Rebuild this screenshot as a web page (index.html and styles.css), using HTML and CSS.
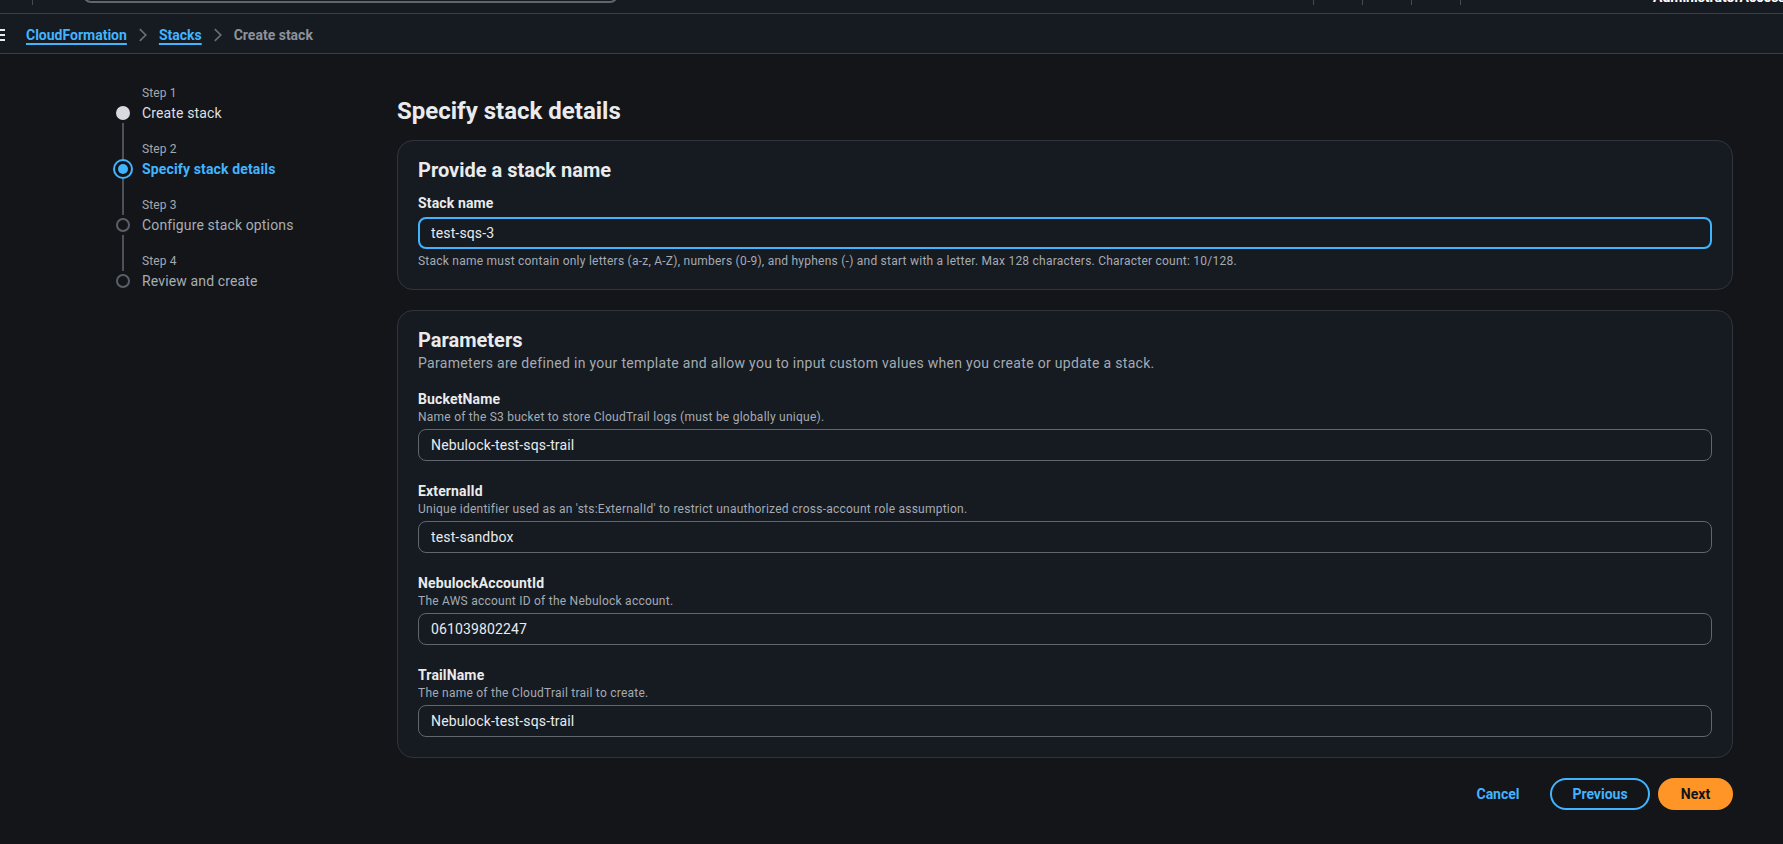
FILE: index.html
```html
<!DOCTYPE html>
<html lang="en">
<head>
<meta charset="utf-8">
<title>Create stack - CloudFormation</title>
<link rel="stylesheet" href="styles.css">
</head>
<body>
<header class="topnav">
  <span class="tn-line"></span>
  <span class="tn-search"></span>
  <span class="tn-sep tn-sep-first"></span>
  <span class="tn-sep"></span>
  <span class="tn-sep"></span>
  <span class="tn-sep"></span>
  <span class="tn-user">AdministratorAccess/nebulock</span>
</header>

<nav class="crumbbar">
  <svg class="burger" width="16" height="13" viewBox="0 0 16 13" aria-hidden="true">
    <rect x="0" y="0" width="16" height="2" fill="#e9ebed"/>
    <rect x="0" y="5" width="16" height="2" fill="#e9ebed"/>
    <rect x="0" y="10" width="16" height="2" fill="#e9ebed"/>
  </svg>
  <a class="crumb" href="#">CloudFormation</a>
  <svg class="chev" width="16" height="16" viewBox="0 0 16 16" aria-hidden="true"><path d="M4.8 2.2 L10.8 8 L4.8 13.8" fill="none" stroke="#6b7079" stroke-width="1.6"/></svg>
  <a class="crumb" href="#">Stacks</a>
  <svg class="chev" width="16" height="16" viewBox="0 0 16 16" aria-hidden="true"><path d="M4.8 2.2 L10.8 8 L4.8 13.8" fill="none" stroke="#6b7079" stroke-width="1.6"/></svg>
  <span class="crumb-current">Create stack</span>
</nav>

<div class="layout">
  <aside class="steps">
    <div class="step">
      <div class="step-label">Step 1</div>
      <div class="ind"><span class="dot-done"></span></div>
      <div class="step-title st-done">Create stack</div>
      <div class="line line-bot"></div>
    </div>
    <div class="step">
      <div class="line line-top"></div>
      <div class="step-label">Step 2</div>
      <div class="ind"><span class="dot-active"><span class="dot-active-inner"></span></span></div>
      <div class="step-title st-active">Specify stack details</div>
      <div class="line line-bot"></div>
    </div>
    <div class="step">
      <div class="line line-top"></div>
      <div class="step-label">Step 3</div>
      <div class="ind"><span class="dot-off"></span></div>
      <div class="step-title st-off">Configure stack options</div>
      <div class="line line-bot"></div>
    </div>
    <div class="step step-last">
      <div class="line line-top"></div>
      <div class="step-label">Step 4</div>
      <div class="ind"><span class="dot-off"></span></div>
      <div class="step-title st-off">Review and create</div>
    </div>
  </aside>

  <main class="content">
    <h1 class="page-title">Specify stack details</h1>

    <section class="card">
      <div class="card-header">
        <h2 class="card-title">Provide a stack name</h2>
      </div>
      <div class="card-body card-body-tight">
        <div class="field">
          <div class="label">Stack name</div>
          <input class="input input-focus" type="text" value="test-sqs-3">
          <div class="constraint">Stack name must contain only letters (a-z, A-Z), numbers (0-9), and hyphens (-) and start with a letter. Max 128 characters. Character count: 10/128.</div>
        </div>
      </div>
    </section>

    <section class="card">
      <div class="card-header">
        <h2 class="card-title">Parameters</h2>
        <div class="card-desc">Parameters are defined in your template and allow you to input custom values when you create or update a stack.</div>
      </div>
      <div class="card-body">
        <div class="field">
          <div class="label">BucketName</div>
          <div class="field-desc">Name of the S3 bucket to store CloudTrail logs (must be globally unique).</div>
          <input class="input" type="text" value="Nebulock-test-sqs-trail">
        </div>
        <div class="field">
          <div class="label">ExternalId</div>
          <div class="field-desc">Unique identifier used as an 'sts:ExternalId' to restrict unauthorized cross-account role assumption.</div>
          <input class="input" type="text" value="test-sandbox">
        </div>
        <div class="field">
          <div class="label">NebulockAccountId</div>
          <div class="field-desc">The AWS account ID of the Nebulock account.</div>
          <input class="input" type="text" value="061039802247">
        </div>
        <div class="field">
          <div class="label">TrailName</div>
          <div class="field-desc">The name of the CloudTrail trail to create.</div>
          <input class="input" type="text" value="Nebulock-test-sqs-trail">
        </div>
      </div>
    </section>

    <div class="actions">
      <button class="btn btn-cancel" type="button">Cancel</button>
      <button class="btn btn-prev" type="button">Previous</button>
      <button class="btn btn-next" type="button">Next</button>
    </div>
  </main>
</div>
</body>
</html>
```

FILE: styles.css
```css
html, body {
  margin: 0;
  padding: 0;
}

body {
  background: #131519;
  color: #e9ebed;
  font-family: Roboto, "Noto Sans", "Liberation Sans", sans-serif;
  font-size: 14px;
  line-height: 20px;
  min-height: 100vh;
}

/* ---------- top navigation (cut off by the viewport) ---------- */
.topnav {
  height: 13px;
  background: #161a21;
  border-bottom: 1px solid #3b4048;
  display: flex;
  align-items: flex-start;
  overflow: hidden;
}

.tn-line {
  flex-shrink: 0;
  margin-left: 32px;
  width: 1px;
  height: 5px;
  background: #444a52;
}

.tn-search {
  flex-shrink: 0;
  margin-left: 50px;
  margin-top: -29px;
  width: 535px;
  height: 32px;
  box-sizing: border-box;
  border: 2px solid #5f6670;
  border-radius: 8px;
}

.tn-sep {
  flex-shrink: 0;
  width: 1px;
  height: 5px;
  background: #444a52;
  margin-left: 48px;
}

.tn-sep-first {
  margin-left: 695px;
}

.tn-user {
  flex-shrink: 0;
  margin-left: 192px;
  margin-top: -11px;
  font-size: 14px;
  font-weight: 700;
  line-height: 16px;
  color: #ffffff;
  white-space: nowrap;
}

/* ---------- breadcrumbs ---------- */
.crumbbar {
  height: 36px;
  padding-top: 3px;
  background: #161a21;
  border-bottom: 1px solid #3b4048;
  display: flex;
  align-items: center;
  overflow: hidden;
}

.burger {
  flex-shrink: 0;
  margin-left: -11px;
  margin-right: 21px;
}

.crumb {
  color: #42b4ff;
  font-weight: 700;
  text-decoration: underline;
  text-decoration-thickness: 2px;
  text-underline-offset: 3px;
  white-space: nowrap;
}

.chev {
  flex-shrink: 0;
  margin: 0 8px;
}

.crumb-current {
  color: #8d9299;
  font-weight: 700;
  white-space: nowrap;
}

/* ---------- layout ---------- */
.layout {
  display: flex;
  align-items: flex-start;
}

.steps {
  flex-shrink: 0;
  width: 397px;
  box-sizing: border-box;
  padding-left: 113px;
  padding-top: 31px;
}

.step {
  display: grid;
  grid-template-columns: 20px 1fr;
  grid-template-rows: 18px 20px 18px;
  column-gap: 9px;
}

.step-last {
  grid-template-rows: 18px 20px;
}

.step-label {
  grid-row: 1;
  grid-column: 2;
  font-size: 12px;
  line-height: 16px;
  color: #a4a9b0;
  letter-spacing: 0.01em;
}

.step-title {
  grid-row: 2;
  grid-column: 2;
  font-size: 14px;
  line-height: 20px;
  white-space: nowrap;
  letter-spacing: 0.01em;
}

.st-done {
  color: #dedfe3;
}

.st-active {
  color: #42b4ff;
  font-weight: 700;
}

.st-off {
  color: #a8adb4;
}

.ind {
  grid-row: 2;
  grid-column: 1;
  display: flex;
  align-items: center;
  justify-content: center;
}

.line {
  grid-column: 1;
  justify-self: center;
  width: 2px;
  background: #4b5159;
}

.line-top {
  grid-row: 1;
}

.line-bot {
  grid-row: 3;
}

.dot-done {
  width: 14px;
  height: 14px;
  border-radius: 50%;
  background: #d9dadf;
}

.dot-active {
  width: 20px;
  height: 20px;
  box-sizing: border-box;
  border: 2px solid #42b4ff;
  border-radius: 50%;
  display: flex;
  align-items: center;
  justify-content: center;
}

.dot-active-inner {
  width: 10px;
  height: 10px;
  border-radius: 50%;
  background: #42b4ff;
}

.dot-off {
  width: 14px;
  height: 14px;
  box-sizing: border-box;
  border: 2px solid #5a6069;
  border-radius: 50%;
}

/* ---------- main ---------- */
.content {
  flex: 1;
  min-width: 0;
  margin-right: 50px;
  padding-bottom: 20px;
}

.page-title {
  margin: 42px 0 14px;
  font-size: 24px;
  line-height: 30px;
  font-weight: 700;
  color: #e9ebed;
}

.card {
  background: #161a21;
  border: 1px solid #30353d;
  border-radius: 16px;
  margin-bottom: 20px;
}

.card-header {
  padding: 17px 20px 0;
}

.card-title {
  margin: 0;
  font-size: 20px;
  line-height: 24px;
  font-weight: 700;
  color: #e9ebed;
}

.card-desc {
  margin-top: 1px;
  font-size: 14px;
  line-height: 20px;
  color: #a4abb3;
  letter-spacing: 0.022em;
}

.card-body {
  padding: 16px 20px 20px;
}

.card-body-tight {
  padding-top: 11px;
}

.field + .field {
  margin-top: 20px;
}

.label {
  font-size: 14px;
  line-height: 20px;
  font-weight: 700;
  color: #e9ebed;
  letter-spacing: 0.01em;
}

.field-desc {
  font-size: 12px;
  line-height: 16px;
  color: #a4abb3;
  letter-spacing: 0.02em;
}

.input {
  display: block;
  width: 100%;
  height: 32px;
  margin: 4px 0 0;
  box-sizing: border-box;
  padding: 0 12px;
  background: #161a21;
  border: 1px solid #5f6670;
  border-radius: 8px;
  color: #e9ebed;
  font-family: inherit;
  font-size: 14px;
  line-height: 20px;
  letter-spacing: 0.01em;
  outline: none;
}

.input-focus {
  border: 2px solid #42b4ff;
  padding: 0 11px;
}

.constraint {
  margin-top: 4px;
  font-size: 12px;
  line-height: 16px;
  color: #a4abb3;
  letter-spacing: 0.02em;
}

.actions {
  display: flex;
  justify-content: flex-end;
  gap: 8px;
}

.btn {
  height: 32px;
  box-sizing: border-box;
  border-radius: 20px;
  font-family: inherit;
  font-size: 14px;
  line-height: 20px;
  font-weight: 700;
  display: flex;
  align-items: center;
  justify-content: center;
  padding: 0;
  cursor: pointer;
}

.btn-cancel {
  width: 82px;
  margin-right: 3px;
  border: none;
  background: transparent;
  color: #42b4ff;
}

.btn-prev {
  width: 100px;
  border: 2px solid #42b4ff;
  background: transparent;
  color: #42b4ff;
}

.btn-next {
  width: 75px;
  border: none;
  background: #ff9526;
  color: #0f141a;
}
```
